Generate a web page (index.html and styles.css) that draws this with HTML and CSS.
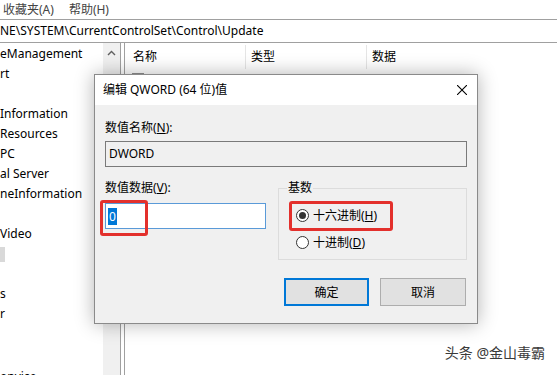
FILE: index.html
```html
<!DOCTYPE html>
<html lang="zh-CN">
<head>
  <meta charset="UTF-8" />
  <title>注册表编辑器</title>
  <link rel="stylesheet" href="styles.css">
</head>
<body>
  <div class="menubar">
    <span>收藏夹(A)</span>
    <span>帮助(H)</span>
  </div>

  <div class="address">NE\SYSTEM\CurrentControlSet\Control\Update</div>

  <div class="main">
    <div class="tree">
      <div class="tree-item">eManagement</div>
      <div class="tree-item">rt</div>
      <div class="tree-item"></div>
      <div class="tree-item">Information</div>
      <div class="tree-item">Resources</div>
      <div class="tree-item">PC</div>
      <div class="tree-item">al Server</div>
      <div class="tree-item">neInformation</div>
      <div class="tree-item"></div>
      <div class="tree-item">Video</div>
      <div class="tree-item"><span class="selected-stub"></span></div>
      <div class="tree-item"></div>
      <div class="tree-item">s</div>
      <div class="tree-item">r</div>
      <div class="tree-item"></div>
      <div class="tree-item"></div>
      <div class="tree-item last">onvice</div>
    </div>
    <div class="vscroll">
      <svg class="scroll-arrow" width="9" height="6" viewBox="0 0 9 6"><path d="M1 5 L4.5 1.5 L8 5" fill="none" stroke="#606060" stroke-width="1.4"/></svg>
    </div>
    <div class="splitter"></div>
    <div class="list">
      <div class="list-head">
        <div class="col col-name">名称</div>
        <div class="col col-type">类型</div>
        <div class="col col-data">数据</div>
      </div>
      <div class="list-row">
        <span class="reg-icon"></span>
      </div>
    </div>
  </div>

  <div class="dialog">
    <div class="dialog-title">
      <span>编辑 QWORD (64 位)值</span>
      <span class="close">
        <svg width="10" height="10" viewBox="0 0 10 10"><path d="M0 0 L10 10 M10 0 L0 10" stroke="#000" stroke-width="1.1"/></svg>
      </span>
    </div>
    <div class="dialog-body">
      <div class="field-label">数值名称(<u>N</u>):</div>
      <div class="textbox disabled">DWORD</div>

      <div class="value-row">
        <div class="value-col">
          <div class="field-label">数值数据(<u>V</u>):</div>
          <div class="textbox focused mark-data"><span class="sel">0</span></div>
        </div>
        <div class="groupbox">
          <div class="group-title">基数</div>
          <div class="radio-row mark-hex"><span class="radio checked"></span><span>十六进制(<u>H</u>)</span></div>
          <div class="radio-row"><span class="radio"></span><span>十进制(<u>D</u>)</span></div>
        </div>
      </div>

      <div class="button-row">
        <button class="btn default">确定</button>
        <button class="btn">取消</button>
      </div>
    </div>
  </div>

  <div class="watermark">头条 @金山毒霸</div>
</body>
</html>
```

FILE: styles.css
```css
body {
  margin: 0;
  width: 557px;
  height: 375px;
  overflow: hidden;
  position: relative;
  background-color: #fff;
  font-family: "Noto Sans", "Noto Sans CJK SC", sans-serif;
  font-size: 12px;
  color: #000;
}
.menubar {
  height: 19px;
  line-height: 19px;
  padding-left: 3px;
  color: #444;
  display: flex;
  gap: 15px;
}
.address {
  height: 22px;
  line-height: 22px;
  border-top: 1px solid #a0a0a0;
  border-bottom: 1px solid #a0a0a0;
  white-space: nowrap;
}
.main {
  display: flex;
  height: 332px;
}
.tree {
  width: 103px;
  padding-top: 1px;
  overflow: hidden;
}
.tree-item {
  height: 20px;
  line-height: 20px;
  white-space: nowrap;
}
.tree-item.last {
  line-height: 14px;
  padding-top: 6px;
}
.selected-stub {
  display: inline-block;
  width: 5px;
  height: 15px;
  margin-top: 3px;
  background-color: #d9d9d9;
  vertical-align: top;
}
.vscroll {
  width: 17px;
  background-color: #f0f0f0;
  display: flex;
  justify-content: center;
}
.scroll-arrow {
  margin-top: 7px;
}
.splitter {
  width: 3px;
  border-left: 1px solid #a0a0a0;
  border-right: 1px solid #a0a0a0;
}
.list {
  flex: 1;
}
.list-head {
  display: flex;
  height: 26px;
  line-height: 24px;
  padding-top: 2px;
  box-sizing: border-box;
}
.col {
  width: 121px;
  padding-left: 5px;
  box-sizing: border-box;
  border-right: 1px solid #e5e5e5;
}
.col-name {
  padding-left: 8px;
}
.col-data {
  border-right: none;
  flex: 1;
}
.list-row {
  height: 22px;
  display: flex;
  align-items: center;
  padding-left: 7px;
}
.reg-icon {
  width: 12px;
  height: 14px;
  border: 1px solid #909090;
  background-color: #fafafa;
  box-sizing: border-box;
}
.dialog {
  position: absolute;
  left: 94px;
  top: 74px;
  width: 384px;
  height: 250px;
  box-sizing: border-box;
  border: 1px solid #8a8a8a;
  background-color: #f0f0f0;
  box-shadow: 0 0 18px rgba(0,0,0,0.3);
}
.dialog-title {
  height: 30px;
  line-height: 30px;
  background-color: #fff;
  padding-left: 8px;
  display: flex;
  justify-content: space-between;
}
.close {
  width: 30px;
  display: flex;
  align-items: center;
  justify-content: center;
}
.dialog-body {
  padding: 15px 10px 0 10px;
}
.field-label {
  line-height: 16px;
}
.textbox {
  height: 26px;
  box-sizing: border-box;
  margin-top: 5px;
  padding-left: 3px;
  line-height: 24px;
  border: 1px solid #7a7a7a;
}
.textbox.disabled {
  background-color: #f0f0f0;
  color: #000;
}
.value-row {
  display: flex;
  gap: 12px;
  margin-top: 13px;
}
.value-col {
  width: 161px;
}
.textbox.focused {
  margin-top: 7px;
  background-color: #fff;
  border-color: #5a9ad8;
  padding-left: 2px;
  display: flex;
  align-items: center;
  position: relative;
}
.sel {
  display: inline-block;
  height: 17px;
  line-height: 17px;
  padding: 0 1px;
  background-color: #0078d7;
  color: #fff;
}
.mark-data::after,
.mark-hex::after {
  content: "";
  position: absolute;
  box-sizing: border-box;
  border: 3px solid #e3302c;
  border-radius: 3px;
}
.mark-data::after {
  left: -6px;
  top: -4px;
  width: 48px;
  height: 36px;
}
.groupbox {
  flex: 1;
  margin-top: 8px;
  border: 1px solid #dcdcdc;
  padding: 0 0 8px 17px;
}
.group-title {
  width: fit-content;
  margin: -9px 0 0 -9px;
  padding: 0 1px;
  line-height: 16px;
  background-color: #f0f0f0;
}
.radio-row {
  position: relative;
  display: flex;
  align-items: center;
  height: 18px;
  margin-top: 10px;
  gap: 4px;
}
.radio-row + .radio-row {
  margin-top: 9px;
}
.mark-hex::after {
  left: -7px;
  top: -5px;
  width: 104px;
  height: 30px;
}
.radio {
  width: 13px;
  height: 13px;
  box-sizing: border-box;
  border: 1px solid #333;
  border-radius: 50%;
  background-color: #fff;
  display: flex;
  align-items: center;
  justify-content: center;
}
.radio.checked::before {
  content: "";
  width: 7px;
  height: 7px;
  border-radius: 50%;
  background-color: #333;
}
.button-row {
  display: flex;
  justify-content: flex-end;
  gap: 11px;
  margin-top: 18px;
  padding-right: 1px;
}
.btn {
  width: 86px;
  height: 28px;
  box-sizing: border-box;
  border: 1px solid #adadad;
  background-color: #e1e1e1;
  font-family: "Noto Sans", "Noto Sans CJK SC", sans-serif;
  font-size: 12px;
  color: #000;
  padding: 0;
}
.btn.default {
  width: 85px;
  border: 2px solid #0078d7;
}
.watermark {
  position: absolute;
  right: 12px;
  bottom: 13px;
  font-size: 14px;
  color: #3a3a3a;
  text-shadow: 0 0 2px #fff;
}
```
